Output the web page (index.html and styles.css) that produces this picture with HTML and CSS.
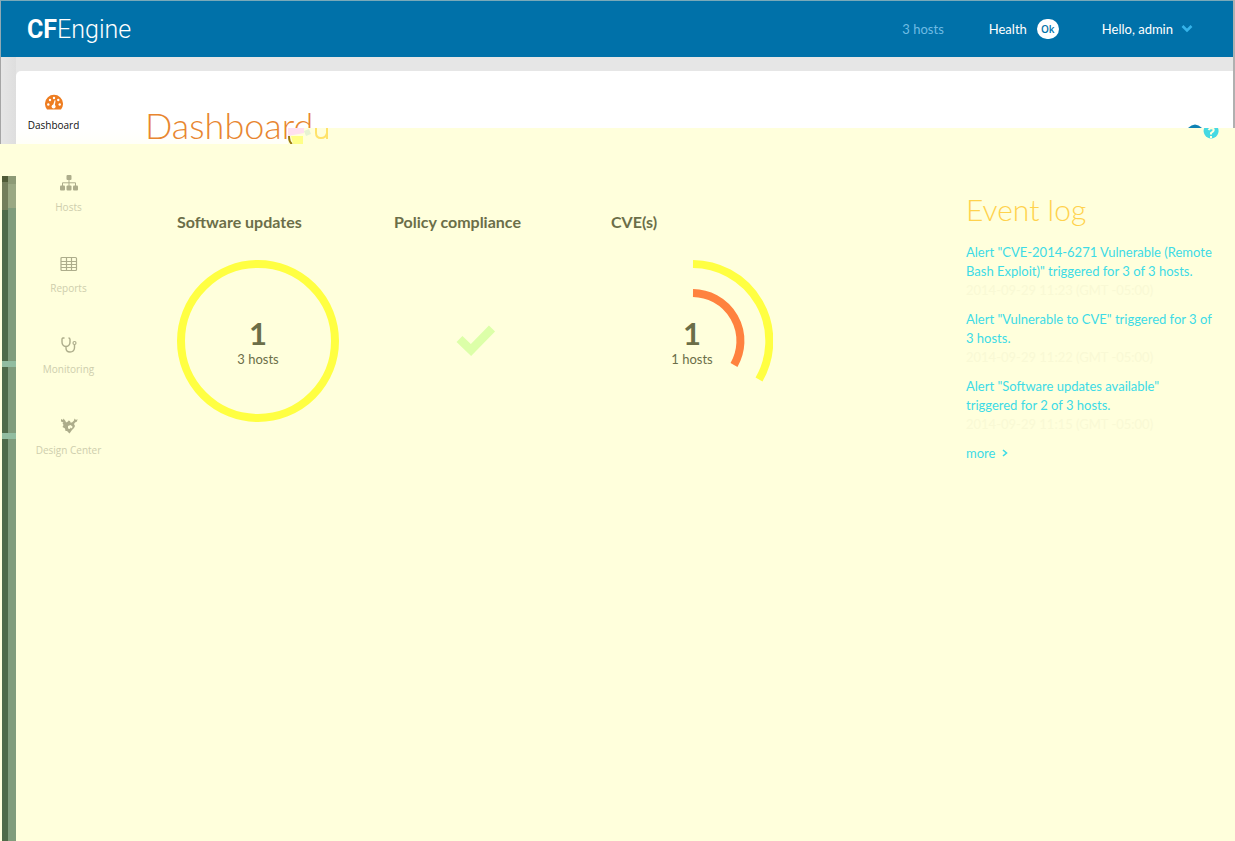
FILE: index.html
```html
<!DOCTYPE html>
<html lang="en">
<head>
<meta charset="utf-8">
<title>CFEngine Dashboard</title>
<link rel="stylesheet" href="styles.css">
</head>
<body>
<div class="app">
  <header class="topbar">
    <a class="logo" href="#"><b>CF</b>Engine</a>
    <div class="topbar-right">
      <a class="host-count" href="#">3 hosts</a>
      <a class="health" href="#">Health <span class="badge">Ok</span></a>
      <button class="user" type="button">Hello, admin
        <svg width="12" height="9" viewBox="0 0 12 9"><path d="M1.500 2 6 6.500 10.500 2" fill="none" stroke="#35b4ea" stroke-width="2.600"/></svg>
      </button>
    </div>
  </header>
  <div class="body">
    <div class="gutter"></div>
    <div class="sheet">
      <nav class="sidebar">
        <a class="nav-item active" href="#">
          <svg width="18" height="18" viewBox="0 0 18 18"><path d="M2 16.500A9 9 0 1 1 16 16.500Z" fill="#ee7d21"/><g fill="#fff"><circle cx="3.300" cy="11.500" r="1.200"/><circle cx="5" cy="7" r="1.200"/><circle cx="9" cy="5" r="1.200"/><circle cx="13.300" cy="7" r="1.200"/><circle cx="14.700" cy="11.500" r="1.200"/><circle cx="8.600" cy="13.500" r="2"/><path d="M7.800 13 9.600 7.200 10.600 7.500 9.600 14Z"/></g></svg>
          <span>Dashboard</span>
        </a>
        <a class="nav-item" href="#">
          <svg width="18" height="18" viewBox="0 0 18 18"><g fill="#adad8b"><rect x="6.500" y="1" width="5" height="5" rx="1"/><rect y="11.500" width="5" height="5" rx="1"/><rect x="6.500" y="11.500" width="5" height="5" rx="1"/><rect x="13" y="11.500" width="5" height="5" rx="1"/></g><path d="M9 5v7M2.500 12V8.800h13V12" fill="none" stroke="#adad8b"/></svg>
          <span>Hosts</span>
        </a>
        <a class="nav-item" href="#">
          <svg width="18" height="18" viewBox="0 0 18 18"><path d="M2 2.500h13.500q1 0 1 1v11q0 1-1 1H2q-1 0-1-1v-11q0-1 1-1ZM1 6.500h15.500M1 9.500h15.500M1 12.500h15.500M6.500 3v12.500M11.500 3v12.500" fill="none" stroke="#adad8b" stroke-width="1.200"/></svg>
          <span>Reports</span>
        </a>
        <a class="nav-item" href="#">
          <svg width="18" height="18" viewBox="0 0 18 18"><path d="M4.500 2H3Q2 2 2 3.500V6q0 4 4 4.500Q10 10 10 6V3.500Q10 2 8.500 2M6 10.500V12q0 4 4 4t4.500-4V8.500" fill="none" stroke="#adad8b" stroke-width="1.400"/><circle cx="14.500" cy="7" r="1.500" fill="none" stroke="#adad8b" stroke-width="1.200"/></svg>
          <span>Monitoring</span>
        </a>
        <a class="nav-item" href="#">
          <svg width="18" height="18" viewBox="0 0 18 18"><path d="M1 4.500 1 2 3 3 3.500 1.500 5.500 4 6 5.500 8 4.500 8.500 3.500 10 4 10.500 5.500 12 5.500 14 3.500 14.500 1.500 16 3 17.500 2 17 4.500 15 5.500 14 7 15 9 14 11 12 13 9.500 16.500 7 14 5.500 14 5 11.500 2.500 10 3.500 8 2.500 6 3.500 5.500Z" fill="#adad8b"/><path d="M12.500 9.500 10.500 8 8 9 8 11.500 10 12 10.500 10.500 12 11.500Z" fill="#ffffdc"/></svg>
          <span>Design Center</span>
        </a>
      </nav>
      <main class="main">
        <h1 class="title">Dashboard</h1>
        <div class="charts">
          <section class="card">
            <h2>Software updates</h2>
            <div class="chart">
              <svg viewBox="0 0 162 162"><circle cx="81" cy="81" r="77" fill="none" stroke="#ffff42" stroke-width="8"/></svg>
              <div class="value"><strong>1</strong><span>3 hosts</span></div>
            </div>
          </section>
          <section class="card">
            <h2>Policy compliance</h2>
            <div class="chart">
              <svg viewBox="0 0 162 162"><path d="M65.500 79 77 90 98 68.500" fill="none" stroke="#dcffa8" stroke-width="8.500"/></svg>
            </div>
          </section>
          <section class="card">
            <h2>CVE(s)</h2>
            <div class="chart">
              <svg viewBox="0 0 162 162"><path d="M82 4A77 77 0 0 1 148 119.500" fill="none" stroke="#ffff42" stroke-width="8"/><path d="M82 33A48 48 0 0 1 123 105" fill="none" stroke="#ff823f" stroke-width="8"/></svg>
              <div class="value"><strong>1</strong><span>1 hosts</span></div>
            </div>
          </section>
        </div>
      </main>
      <aside class="events">
        <h2>Event log</h2>
        <ul>
          <li><a href="#">Alert "CVE-2014-6271 Vulnerable (Remote Bash Exploit)" triggered for 3 of 3 hosts.</a><time>2014-09-29 11:23 (GMT -05:00)</time></li>
          <li><a href="#">Alert "Vulnerable to CVE" triggered for 3 of 3 hosts.</a><time>2014-09-29 11:22 (GMT -05:00)</time></li>
          <li><a href="#">Alert "Software updates available" triggered for 2 of 3 hosts.</a><time>2014-09-29 11:15 (GMT -05:00)</time></li>
        </ul>
        <a class="more" href="#">more <svg width="6" height="8" viewBox="0 0 6 8"><path d="M1 1 4.500 4 1 7" fill="none" stroke="#3ddbe6" stroke-width="1.600"/></svg></a>
      </aside>
      <div class="tint"></div>
      <svg class="fragment" width="46" height="16" viewBox="0 0 46 16"><path d="M0 0h46v16H0Z" fill="#ffffdc"/><path d="M0 0h16v5L0 8Z" fill="#ffe0f0"/><path d="M1 8q0 6 3 8" fill="none" stroke="#9a7a10" stroke-width="2"/><path d="M3 8h12v8H5Z" fill="#ffff88"/><path d="M16 3l5-2 2 5-5 2Z" fill="#e6f3d2"/><path d="M28 0v5q0 5 5 5t6-5V0m0 0v11" fill="none" stroke="#ffe36a" stroke-width="2"/></svg>
      <a class="help" href="#" aria-label="Help"><svg width="32" height="20" viewBox="0 0 32 20"><path d="M1 5Q8-2 15 5Z" fill="#0f82b4"/><path d="M17.200 5H31A7.500 7.500 0 1 1 17.200 5Z" fill="#45d9e3"/><path d="M21.500 7q2-3 5-1 1 2-2.500 4v1.500M24 13v2" fill="none" stroke="#ffffdc" stroke-width="2"/></svg></a>
    </div>
  </div>
  <div class="edge"></div>
</div>
</body>
</html>
```
FILE: styles.css
```css
* { box-sizing: border-box; }
body { margin: 0; background: #ffffdc; font: 13px/18px Lato, "Open Sans", sans-serif; color: #6b6e48; }
a { color: inherit; text-decoration: none; }
h1, h2, ul { margin: 0; padding: 0; }
svg { display: block; }

.app { position: relative; min-height: 100vh; display: flex; flex-direction: column; }
.edge { position: absolute; top: 0; right: 0; width: 2px; height: 128px; background: #b0b0b0; }

.topbar { height: 57px; display: flex; align-items: center; justify-content: space-between; padding: 0 42px 0 26px; background: #0071a9; border-top: 1px solid #79a9b9; border-left: 1px solid #8fa9b5; color: #fff; }
.logo { font: 300 25px/32px Roboto, sans-serif; padding-top: 2px; }
.logo b { font-weight: 700; }
.topbar-right { display: flex; align-items: center; padding-bottom: 1px; }
.host-count { color: #6fbce4; margin-right: 45px; }
.health { display: flex; align-items: center; gap: 10px; margin-right: 43px; }
.badge { width: 22px; height: 20px; border-radius: 10px; background: #fff; color: #0071a9; font: 600 10px/20px "Open Sans", sans-serif; text-align: center; }
.user { display: flex; align-items: center; gap: 8px; border: 0; padding: 0; background: none; color: inherit; font: inherit; }

.body { flex: 1; display: grid; grid-template-columns: 16px 1fr; background: linear-gradient(#e6e6e6 71px, #ffffdc 71px); }
.gutter {
  background:
    linear-gradient(#92bda0, #92bda0) 2px 304px / 14px 6px no-repeat,
    linear-gradient(#92bda0, #92bda0) 2px 376px / 14px 6px no-repeat,
    linear-gradient(#4f5b37, #4f5b37) 2px 119px / 6px 6px no-repeat,
    linear-gradient(#737e5b, #737e5b) 2px 125px / 6px 28px no-repeat,
    linear-gradient(#8d9a76, #8d9a76) 8px 119px / 8px 8px no-repeat,
    linear-gradient(#9aa883, #9aa883) 8px 127px / 8px 24px no-repeat,
    linear-gradient(#4f6b49, #4f6b49) 2px 119px / 6px 100% no-repeat,
    linear-gradient(#809c7c, #809c7c) 8px 119px / 8px 100% no-repeat,
    linear-gradient(90deg, #a5a5a5 1px, #e6e6e6 1px, #dedede) 0 0 / 16px 87px no-repeat,
    #ffffdc;
}
.sheet { position: relative; margin-top: 14px; display: grid; grid-template-columns: 105px 1fr 269px; background: linear-gradient(#fff 57px, #fffff8 73px, #ffffdc 73px); border-top-left-radius: 5px; }

.sidebar { display: flex; flex-direction: column; gap: 39px; padding-top: 22px; }
.nav-item { position: relative; display: flex; flex-direction: column; align-items: center; gap: 6px; font: 10px/18px "Open Sans", sans-serif; color: #cecead; }
.nav-item.active { z-index: 2; margin: 0 30px 1px 0; gap: 5px; color: #111; }

.main { padding: 30px 0 0 24px; }
.title { font: 300 36px/48px Lato, sans-serif; color: #e8862f; }
.charts { display: grid; grid-template-columns: repeat(3, 217px); padding: 63px 0 0 32px; }
.card h2 { font: 700 16px/20px Lato, sans-serif; }
.chart { position: relative; width: 162px; height: 162px; margin-top: 28px; }
.value { position: absolute; inset: 0; display: flex; flex-direction: column; align-items: center; padding-top: 56px; }
.value strong { font: 700 31px/34px Lato, sans-serif; }

.events { padding: 121px 22px 0 0; }
.events h2 { font: 300 30px/34px Lato, sans-serif; color: #ffd24d; }
.events ul { list-style: none; padding-top: 17px; display: grid; gap: 11px; }
.events li { display: grid; line-height: 19px; }
.events li a, .more { color: #3ddbe6; }
.events time { line-height: 18px; color: #f9f9d5; }
.more { display: flex; align-items: center; gap: 7px; padding-top: 11px; }

.tint { position: absolute; top: 57px; left: 272px; right: 0; height: 16px; background: #ffffdc; }
.fragment { position: absolute; top: 57px; left: 272px; }
.help { position: absolute; top: 52px; right: 16px; clip-path: inset(1px 0 0 0); }
```
